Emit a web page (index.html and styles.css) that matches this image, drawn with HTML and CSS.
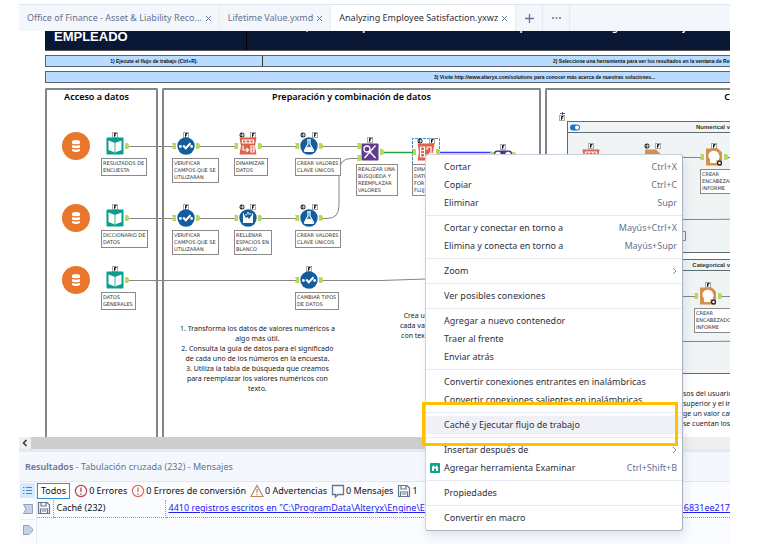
FILE: index.html
```html
<!DOCTYPE html>
<html lang="es">
<head>
<meta charset="utf-8">
<title>Analyzing Employee Satisfaction.yxwz</title>
<link rel="stylesheet" href="styles.css">
</head>
<body>
<svg class="defs" aria-hidden="true">
  <symbol id="flag" viewBox="0 0 6 6"><rect x=".5" y=".5" width="5" height="5" fill="#fff" stroke="#aaa"/><path d="M2.500 4.800V1.500h2M2.500 3h1.500" stroke="#111" fill="none"/></symbol>
  <symbol id="ball" viewBox="0 0 6 6"><circle cx="3" cy="3" r="2.500" fill="#222"/><path d="M3 1.200a1.800 1.800 0 0 1 0 3.600z" fill="#e6c8a8"/><path d="M1 2h2v2H1z" fill="#4577a8"/></symbol>
  <symbol id="in" viewBox="0 0 4 6"><path d="M0 0h4v6H0l1.200-3z" fill="#b4da5c"/></symbol>
  <symbol id="out" viewBox="0 0 4 6"><path d="M0 0h2.500L4 1.500v3L2.500 6H0z" fill="#b4da5c"/></symbol>
  <symbol id="book" viewBox="0 0 18 18"><rect x=".5" y=".5" width="17" height="17" rx="1" fill="#0c9e8d"/><path d="M2.500 3.500 9 6l6.500-2.500v9.500L9 15.500 2.500 13z" fill="#fff"/><path d="M9 6v9" stroke="#0c9e8d" stroke-width=".8"/></symbol>
  <symbol id="check" viewBox="0 0 18 18"><circle cx="9" cy="9" r="8.700" fill="#145d9c"/><path d="m6.200 8.500 2.600 2.800 4.700-5" fill="none" stroke="#fff" stroke-width="2"/><circle cx="3.400" cy="9.500" r="1.400" fill="#fff"/><circle cx="14.600" cy="9.500" r="1.400" fill="#fff"/></symbol>
  <symbol id="flask" viewBox="0 0 18 18"><circle cx="9" cy="9" r="8.700" fill="#145d9c"/><path d="M7.200 2.800h3.600M8 3v4L4.600 13q-.5 1.500 1 1.500h6.800q1.500 0 1-1.500L10 7V3" fill="none" stroke="#fff" stroke-width="1.200"/><path d="M6.300 10.500q2.700-1.500 5.400.3l1.500 3.200H4.800z" fill="#fff"/></symbol>
  <symbol id="clean" viewBox="0 0 18 18"><circle cx="9" cy="9" r="8.700" fill="#145d9c"/><path d="M4 6.500h1.500L7 9l1.500-1L10 10l2.500-3.500H14V14H4z" fill="#fff"/><path d="M4.500 4.500v3M13.500 4.500v3M9 3v2.500M7 5v1.500M11 4v1.500" stroke="#fff" stroke-width="1.200"/></symbol>
  <symbol id="pivot" viewBox="0 0 18 18"><path d="M.5.500h17L16 9l1.500 8.500H.5L2 9z" fill="#df6148"/><path d="M3.500 3h11v3h-11zM7 3v3M11 3v3M12 9h3v6h-3zM12 12h3M4 8.500V13h5M7.500 11 9.500 13l-2 2" fill="none" stroke="#fff" stroke-width="1.200"/></symbol>
  <symbol id="unpivot" viewBox="0 0 18 18"><path d="M.5.500h17L16 9l1.500 8.500H.5L2 9z" fill="#df6148"/><path d="M3.500 4h4v10h-4zM3.500 7.500h4M3.500 10.500h4M10 4h4v8M12 10l2 2 2-2M10 4v3" fill="none" stroke="#fff" stroke-width="1.200"/></symbol>
  <symbol id="find" viewBox="0 0 18 18"><rect x=".5" y=".5" width="17" height="17" rx="1" fill="#613b8e"/><circle cx="6" cy="6" r="3" fill="none" stroke="#fff" stroke-width="1.300"/><path d="m8 8 6.500 7M14.500 2.500 3.500 15" stroke="#fff" stroke-width="1.400"/></symbol>
  <symbol id="join" viewBox="0 0 18 18"><rect y=".5" width="18" height="17" rx="3" fill="#55308a"/><circle cx="4" cy="4.500" r="2.800" fill="#fff"/><circle cx="14" cy="4.500" r="2.800" fill="#fff"/></symbol>
  <symbol id="doc" viewBox="0 0 18 18"><path d="M1 .5h11l5 5v12H1z" fill="#d4914c"/></symbol>
  <symbol id="head" viewBox="0 0 18 18"><path d="M1 .5h12l4 4v13H1z" fill="#d4914c"/><path d="M5 15v-3.500Q3 9.500 3.500 6.500 5 2.500 9 2.700q4.500.3 5 4.300l1 2.500h-1V12h-2.500v3z" fill="#fff"/><circle cx="14.500" cy="15" r="1.900" fill="#fff" stroke="#222" stroke-width="1.300"/></symbol>
  <symbol id="db" viewBox="0 0 28 28"><circle cx="14" cy="14" r="14" fill="#e8762d"/><path d="M10 9q4-2 8 0v2.500q-4 1.700-8 0zM10 13q4 1.500 8 0v2.500q-4 1.700-8 0zM10 17q4 1.500 8 0v2q-4 2-8 0z" fill="#fff"/></symbol>
  <symbol id="save" viewBox="0 0 14 14"><path d="M1.500 1.500h8.500L12.500 4v8.500h-11zM4 1.500v3.500h5V1.500M3.500 12.500V8h7v4.500M5 10h4" fill="none" stroke="#68758c" stroke-width="1.200"/></symbol>
  <symbol id="alert" viewBox="0 0 14 14"><circle cx="7" cy="7" r="5.600" fill="none" stroke="currentColor" stroke-width="1.200"/><path d="M7 3.500v4.500M7 9.200v1.500" stroke="currentColor" stroke-width="1.300"/></symbol>
  <symbol id="close" viewBox="0 0 7 7"><path d="m1 1 5 5M6 1 1 6" stroke="#66749a" stroke-width="1"/></symbol>
</svg>

<div class="app">
  <nav class="tabs" aria-label="Documentos">
    <div class="tab"><a href="#a">Office of Finance - Asset &amp; Liability Reco...</a><button aria-label="Cerrar"><svg width="7" height="7"><use href="#close"/></svg></button></div>
    <div class="tab"><a href="#b">Lifetime Value.yxmd</a><button aria-label="Cerrar"><svg width="7" height="7"><use href="#close"/></svg></button></div>
    <div class="tab active"><a href="#c" aria-current="page">Analyzing Employee Satisfaction.yxwz</a><button aria-label="Cerrar"><svg width="7" height="7"><use href="#close"/></svg></button></div>
    <button class="tool" aria-label="Nueva pestaña"><svg width="11" height="11"><path d="M5.500 1v9M1 5.500h9" stroke="#66749a" stroke-width="1.300"/></svg></button>
    <button class="tool" aria-label="Más"><svg width="11" height="11"><path d="M1 5h2M4.500 5h2M8 5h2" stroke="#66749a" stroke-width="1.500"/></svg></button>
  </nav>

  <main class="canvas">
    <div class="sheet">
      <header class="hero"><h1>EMPLEADO</h1><p>variables, el informe que usamos deberán ser diferentes para los valores categóricos. Este flujo de trabajo puede ser</p></header>
      <div class="bar"><p class="step-one">1) Ejecute el flujo de trabajo (Ctrl+R).</p><p class="step-two">2) Seleccione una herramienta para ver los resultados en la ventana de Resultados.</p></div>
      <div class="bar"><p class="step-three">3) Visite http://www.alteryx.com/solutions para conocer más acerca de nuestras soluciones...</p></div>
      <div class="columns">
        <section class="column access"><h2>Acceso a datos</h2></section>
        <section class="column prep"><h2>Preparación y combinación de datos</h2></section>
        <section class="column build"><h2>C</h2>
          <div class="box"><h3><svg width="11" height="7"><rect y=".5" width="10" height="6" rx="3" fill="#1976d2"/><circle cx="7" cy="3.500" r="2" fill="#fff"/></svg><span>Numerical v</span></h3></div>
          <div class="box low"><h3><span>Categorical v</span></h3></div>
        </section>
      </div>
    </div>

    <svg class="wires" width="738" height="406" viewBox="19 31 738 406" fill="none" stroke="#858585">
      <path d="M128 146.500h45M200 146.500h36M260 146.500h37M321 146.500h37M128 218.500h45M200 218.500h36M260 218.500h37M321 218.500h6q12 0 12-13v-33q0-14 12-14h8M128 280.500h169M321 280.500h60l45-1.500"/>
      <path d="M683 157.500h19M727 157.500h30M683 296.500h13M720 296.500h37M683 219.500h22l52-.5M683 341.500h24l50-.5M683 231.500h2.500v9H683"/>
      <path d="M382 152.500h31" stroke="#25a244" stroke-width="1.500"/>
      <path d="M440 152.500h52" stroke="#3a3cff" stroke-width="1.500"/>
      <path d="M412.500 164v-25.500h27V164" stroke="#2f8fdb" stroke-dasharray="3 1"/>
      <path d="M560 113.500h5M562.500 112v4" stroke="#557"/><use href="#flag" x="559" y="115" width="6" height="6"/>
      <g stroke="none"><use href="#db" x="62" y="132" width="28" height="28"/><use href="#db" x="62" y="204" width="28" height="28"/><use href="#db" x="62" y="266" width="28" height="28"/></g>
    </svg>

    <figure class="node col-a row-1"><svg viewBox="-14 -15 30 27"><use href="#flag" x="-3" y="-14" width="6" height="6"/><use href="#book" x="-9" y="-9" width="18" height="18"/><use href="#out" x="10" y="-3" width="4" height="6"/></svg><figcaption>RESULTADOS DE<br>ENCUESTA</figcaption></figure>
    <figure class="node col-a row-2"><svg viewBox="-14 -15 30 27"><use href="#flag" x="-3" y="-14" width="6" height="6"/><use href="#book" x="-9" y="-9" width="18" height="18"/><use href="#out" x="10" y="-3" width="4" height="6"/></svg><figcaption>DICCIONARIO DE<br>DATOS</figcaption></figure>
    <figure class="node col-a row-3"><svg viewBox="-14 -15 30 27"><use href="#flag" x="-3" y="-14" width="6" height="6"/><use href="#book" x="-9" y="-9" width="18" height="18"/><use href="#out" x="10" y="-3" width="4" height="6"/></svg><figcaption>DATOS<br>GENERALES</figcaption></figure>
    <figure class="node col-b row-1"><svg viewBox="-14 -15 30 27"><use href="#flag" x="-3" y="-14" width="6" height="6"/><use href="#check" x="-9" y="-9" width="18" height="18"/><use href="#in" x="-14" y="-3" width="4" height="6"/><use href="#out" x="10" y="-3" width="4" height="6"/></svg><figcaption>VERIFICAR<br>CAMPOS QUE SE<br>UTILIZARÁN</figcaption></figure>
    <figure class="node col-b row-2"><svg viewBox="-14 -15 30 27"><use href="#flag" x="-3" y="-14" width="6" height="6"/><use href="#check" x="-9" y="-9" width="18" height="18"/><use href="#in" x="-14" y="-3" width="4" height="6"/><use href="#out" x="10" y="-3" width="4" height="6"/></svg><figcaption>VERIFICAR<br>CAMPOS QUE SE<br>UTILIZARÁN</figcaption></figure>
    <figure class="node col-c row-1"><svg viewBox="-14 -15 30 27"><use href="#ball" x="-9" y="-14" width="6" height="6"/><use href="#flag" x="2" y="-14" width="6" height="6"/><use href="#pivot" x="-9" y="-9" width="18" height="18"/><use href="#in" x="-14" y="-3" width="4" height="6"/><use href="#out" x="10" y="-3" width="4" height="6"/></svg><figcaption>DINAMIZAR<br>DATOS</figcaption></figure>
    <figure class="node col-c row-2"><svg viewBox="-14 -15 30 27"><use href="#ball" x="-9" y="-14" width="6" height="6"/><use href="#flag" x="2" y="-14" width="6" height="6"/><use href="#clean" x="-9" y="-9" width="18" height="18"/><use href="#in" x="-14" y="-3" width="4" height="6"/><use href="#out" x="10" y="-3" width="4" height="6"/></svg><figcaption>RELLENAR<br>ESPACIOS EN<br>BLANCO</figcaption></figure>
    <figure class="node col-d row-1"><svg viewBox="-14 -15 30 27"><use href="#ball" x="-9" y="-14" width="6" height="6"/><use href="#flag" x="3" y="-14" width="6" height="6"/><use href="#flask" x="-9" y="-9" width="18" height="18"/><use href="#in" x="-14" y="-3" width="4" height="6"/><use href="#out" x="10" y="-3" width="4" height="6"/></svg><figcaption>CREAR VALORES<br>CLAVE ÚNICOS</figcaption></figure>
    <figure class="node col-d row-2"><svg viewBox="-14 -15 30 27"><use href="#ball" x="-9" y="-14" width="6" height="6"/><use href="#flag" x="3" y="-14" width="6" height="6"/><use href="#flask" x="-9" y="-9" width="18" height="18"/><use href="#in" x="-14" y="-3" width="4" height="6"/><use href="#out" x="10" y="-3" width="4" height="6"/></svg><figcaption>CREAR VALORES<br>CLAVE ÚNICOS</figcaption></figure>
    <figure class="node col-d row-3"><svg viewBox="-14 -15 30 27"><use href="#flag" x="-3" y="-14" width="6" height="6"/><use href="#check" x="-9" y="-9" width="18" height="18"/><use href="#in" x="-14" y="-3" width="4" height="6"/><use href="#out" x="10" y="-3" width="4" height="6"/></svg><figcaption>CAMBIAR TIPOS<br>DE DATOS</figcaption></figure>
    <figure class="node replace"><svg viewBox="-14 -15 30 27"><use href="#flag" x="-3" y="-15" width="6" height="6"/><use href="#find" x="-9" y="-9" width="18" height="18"/><use href="#in" x="-13" y="-9" width="4" height="6"/><use href="#in" x="-13" y="3" width="4" height="6"/><use href="#out" x="10" y="-3" width="4" height="6"/></svg><figcaption>REALIZAR UNA<br>BÚSQUEDA Y<br>REEMPLAZAR<br>VALORES</figcaption></figure>
    <figure class="node selected"><svg viewBox="-14 -15 30 27"><use href="#ball" x="-9" y="-14" width="6" height="6"/><use href="#flag" x="3" y="-14" width="6" height="6"/><use href="#unpivot" x="-9" y="-9" width="18" height="18"/><use href="#in" x="-14" y="-3" width="4" height="6"/><use href="#out" x="10" y="-3" width="4" height="6"/></svg><figcaption>DINA<br>DATO<br>FOR<br>FLUJ</figcaption></figure>
    <figure class="node merge"><svg viewBox="-14 -15 30 27"><use href="#flag" x="-3" y="-15" width="6" height="6"/><use href="#join" x="-9" y="-9" width="18" height="18"/><use href="#in" x="-13" y="-7" width="4" height="6"/><use href="#out" x="9" y="-7" width="4" height="6"/></svg></figure>
    <figure class="node num-a"><svg viewBox="-14 -15 30 27"><use href="#flag" x="-3" y="-13" width="6" height="6"/><use href="#pivot" x="-9" y="-7" width="18" height="18"/></svg></figure>
    <figure class="node num-b"><svg viewBox="-14 -15 30 27"><use href="#ball" x="-9" y="-13" width="6" height="6"/><use href="#flag" x="2" y="-13" width="6" height="6"/><use href="#doc" x="-9" y="-7" width="18" height="18"/></svg></figure>
    <figure class="node num-c"><svg viewBox="-14 -15 30 27"><use href="#flag" x="-3" y="-14" width="6" height="6"/><use href="#head" x="-9" y="-9" width="18" height="18"/><use href="#in" x="-14" y="-3" width="4" height="6"/><use href="#out" x="10" y="-3" width="4" height="6"/></svg><figcaption>CREAR<br>ENCABEZADO<br>INFORME</figcaption></figure>
    <figure class="node cat-c"><svg viewBox="-14 -15 30 27"><use href="#flag" x="-3" y="-14" width="6" height="6"/><use href="#head" x="-9" y="-9" width="18" height="18"/><use href="#in" x="-14" y="-3" width="4" height="6"/><use href="#out" x="10" y="-3" width="4" height="6"/></svg><figcaption>CREAR<br>ENCABEZADO<br>INFORME</figcaption></figure>

    <p class="note note-steps">1. Transforma los datos de valores numéricos a<br>algo más útil.<br>2. Consulta la guía de datos para el significado<br>de cada uno de los números en la encuesta.<br>3. Utiliza la tabla de búsqueda que creamos<br>para reemplazar los valores numéricos con<br>texto.</p>
    <p class="note note-create">Crea u<br>cada va<br>con tex</p>
    <p class="note note-user">sos del usuario<br>superior y el in<br>ge un valor cat<br>se cuentan los</p>
  </main>

  <div class="scroll"><button aria-label="Izquierda"><svg width="6" height="8"><path d="M4.500 1 1.500 4l3 3" fill="none" stroke="#333" stroke-width="1.500"/></svg></button><div class="thumb"></div></div>

  <section class="results">
    <h2><b>Resultados</b> - Tabulación cruzada (232) - Mensajes</h2>
    <div class="results-body">
      <div class="rail">
        <button class="on" aria-label="Lista"><svg width="9" height="9"><path d="M0 1.500h1.500M3 1.500h6M0 4.500h1.500M3 4.500h6M0 7.500h1.500M3 7.500h6" stroke="#4d86bd"/></svg></button>
        <button aria-label="Entrada"><svg width="10" height="10"><path d="M.5.500h9v9h-9L3 5z" fill="#c7d1e4" stroke="#8fa0c2"/></svg></button>
        <button class="split" aria-label="Salida"><svg width="10" height="10"><path d="M.5.500H6L9.500 4v2L6 9.500H.5z" fill="#c7d1e4" stroke="#8fa0c2"/></svg></button>
      </div>
      <div class="list">
        <div class="filters">
          <button class="all">Todos</button>
          <button class="red"><svg width="14" height="14"><use href="#alert"/></svg>0 Errores</button>
          <button class="coral"><svg width="14" height="14"><use href="#alert"/></svg>0 Errores de conversión</button>
          <button><svg width="14" height="14"><path d="M7 1.500 13 12.500H1z" fill="none" stroke="#b98a62" stroke-width="1.200"/><path d="M7 5v4M7 10v1.300" stroke="#b98a62" stroke-width="1.200"/></svg>0 Advertencias</button>
          <button><svg width="14" height="14"><path d="M1.500 1.500h11v9H7l-2.500 2.500v-2.500h-3z" fill="none" stroke="#68758c" stroke-width="1.300"/></svg>0 Mensajes</button>
          <button><svg width="14" height="14"><use href="#save"/></svg>1</button>
        </div>
        <table><tr><td class="ico"><svg width="14" height="14"><use href="#save"/></svg></td><td class="name">Caché (232)</td><td class="link"><div><a href="#log">4410 registros escritos en "C:\ProgramData\Alteryx\Engine\Enc</a><a href="#log">_6831ee217</a></div></td></tr></table>
      </div>
    </div>
  </section>

  <ul class="menu" role="menu">
    <li><button>Cortar<kbd>Ctrl+X</kbd></button></li>
    <li><button>Copiar<kbd>Ctrl+C</kbd></button></li>
    <li><button>Eliminar<kbd>Supr</kbd></button></li>
    <li class="sep"><button>Cortar y conectar en torno a<kbd>Mayús+Ctrl+X</kbd></button></li>
    <li><button>Elimina y conecta en torno a<kbd>Mayús+Supr</kbd></button></li>
    <li class="sep"><button>Zoom<svg width="5" height="8"><path d="m1 1 3 3-3 3" fill="none" stroke="#7d8bab"/></svg></button></li>
    <li class="sep"><button>Ver posibles conexiones</button></li>
    <li class="sep"><button>Agregar a nuevo contenedor</button></li>
    <li><button>Traer al frente</button></li>
    <li><button>Enviar atrás</button></li>
    <li class="sep"><button>Convertir conexiones entrantes en inalámbricas</button></li>
    <li><button>Convertir conexiones salientes en inalámbricas</button></li>
    <li class="sep"><button class="current">Caché y Ejecutar flujo de trabajo</button></li>
    <li class="sep"><button>Insertar después de<svg width="5" height="8"><path d="m1 1 3 3-3 3" fill="none" stroke="#7d8bab"/></svg></button></li>
    <li><button class="with-icon"><svg width="10" height="10"><rect width="10" height="10" rx="1" fill="#12a08f"/><path d="M2 8V4.500L3 2.500h1.300V4h1.400V2.500H7l1 2V8H6V5.500H4V8z" fill="#fff"/></svg>Agregar herramienta Examinar<kbd>Ctrl+Shift+B</kbd></button></li>
    <li class="sep"><button>Propiedades</button></li>
    <li class="sep"><button>Convertir en macro</button></li>
  </ul>
  <div class="frame"></div>
</div>
</body>
</html>
```
FILE: styles.css
```css
* { box-sizing: border-box; margin: 0; padding: 0; }
body { background: #fff; font: 9px/12px "Noto Sans", sans-serif; color: #2d3142; overflow: hidden; }
button { font: inherit; color: inherit; background: none; border: 0; }
a { color: inherit; text-decoration: none; }
svg { display: block; flex: none; }
.defs { position: absolute; width: 0; height: 0; }

.app { position: relative; display: flex; flex-direction: column; height: 100vh; margin: 0 27px 0 19px; padding-top: 4px; }

.tabs { display: flex; flex: none; height: 27px; background: #f3f7fc; border-top: 1px solid #dbe5f1; color: #66728f; }
.tab { display: flex; align-items: center; gap: 3px; padding: 0 7px 0 8px; border-right: 1px solid #e6edf6; white-space: nowrap; }
.tab.active { background: #fff; color: #2d3142; }
.tool { display: flex; align-items: center; justify-content: center; width: 27px; border-right: 1px solid #e3eaf4; }

.canvas { position: relative; flex: 1; min-height: 0; overflow: hidden; background: #fff; }
.sheet { display: flex; flex-direction: column; gap: 4px; height: 100%; padding-left: 26px; }
.hero { display: flex; flex: none; height: 20px; overflow: hidden; background: #0a1735; border-bottom: 1px solid #555; color: #fff; white-space: nowrap; }
.hero h1 { flex: none; width: 202px; padding-left: 9px; border-right: 1px solid #000; font: bold 13px/12px "Liberation Sans", sans-serif; }
.hero p { margin-top: -8px; padding-left: 18px; font-weight: bold; line-height: 10px; }
.bar { display: flex; flex: none; height: 12px; background: #b9dbff; border: 1px solid #59616d; border-right: 0; font: bold 5px/10px "Liberation Sans", sans-serif; color: #111; white-space: nowrap; overflow: hidden; }
.step-one { flex: none; width: 217px; text-align: center; border-right: 1px solid #333; }
.step-two { padding-left: 290px; }
.step-three { padding-left: 388px; }
.columns { display: flex; flex: 1; gap: 4px; padding-top: 1px; }
.column { border: 2px solid #858585; border-bottom: 0; border-radius: 2px 2px 0 0; }
.column h2 { font-size: 9px; font-weight: 600; line-height: 14px; text-align: center; color: #000; }
.access { width: 113px; padding-right: 10px; }
.prep { width: 379px; }
.build { flex: 1; border-right: 0; border-top-right-radius: 0; padding-left: 20px; }
.build h2 { text-align: right; }
.box { height: 132px; margin-top: 17px; background: #f0f4f5; border: 1px solid #5b6d70; border-right: 0; overflow: hidden; }
.box.low { height: 115px; margin-top: 6px; }
.box h3 { display: flex; align-items: center; height: 11px; padding-left: 2px; border-bottom: 1px solid #5b6d70; font: bold 6px/10px "Liberation Sans", sans-serif; color: #333; white-space: nowrap; }
.box span { margin-left: auto; }

.wires { position: absolute; left: 0; top: 0; }
.node { position: absolute; }
.node svg { width: 30px; height: 27px; }
.node figcaption { width: max-content; padding: 1px 2px 1px 1px; background: #fff; border: 1px solid #8a8a8a; font: 5px/7px "DejaVu Sans", sans-serif; color: #333; }
.row-1 { top: 100px; }
.row-2 { top: 172px; }
.row-3 { top: 234px; }
.col-a { left: 82px; }
.col-b { left: 153px; }
.col-c { left: 215px; }
.col-d { left: 276px; }
.replace { left: 337px; top: 106px; }
.selected { left: 393px; top: 106px; }
.merge { left: 470px; top: 113px; }
.num-a { left: 558px; top: 110px; }
.num-b { left: 620px; top: 110px; }
.num-c { left: 681px; top: 111px; }
.cat-c { left: 675px; top: 250px; }
.note { position: absolute; font-size: 7px; line-height: 10px; color: #222; white-space: nowrap; }
.note-steps { left: 161px; top: 293px; text-align: center; }
.note-create { left: 381px; top: 280px; text-align: right; }
.note-user { left: 664px; top: 358px; }

.scroll { display: flex; flex: none; height: 12px; background: #efefef; }
.scroll button { display: flex; align-items: center; justify-content: center; width: 12px; }
.thumb { width: 80%; background: #cdcdcd; }

.results { flex: none; height: 95px; background: #fafcff; border-top: 3px solid #e2e9f4; overflow: hidden; }
.results h2 { height: 30px; padding-left: 6px; background: #f4f8fd; border-bottom: 1px solid #e0e6f2; font-size: 9px; line-height: 29px; font-weight: normal; color: #66728f; }
.results b { font-weight: 600; }
.results-body { display: flex; height: 62px; }
.rail { width: 18px; border-right: 1px solid #e6ebf5; padding-top: 1px; }
.rail button { display: flex; align-items: center; justify-content: center; width: 15px; height: 15px; margin-bottom: 3px; margin-left: 1px; }
.rail .on { background: #d6eaff; }
.rail .split { height: 20px; border-top: 1px solid #e6ebf5; }
.list { flex: 1; min-width: 0; }
.filters { display: flex; align-items: center; gap: 4px; height: 18px; color: #111; white-space: nowrap; overflow: hidden; }
.filters button { display: flex; align-items: center; gap: 1px; }
.filters .all { height: 16px; padding: 0 3px; border: 1px solid #3390dd; background: #fff; }
.red svg { color: #c04050; }
.coral svg { color: #d9705a; }
table { width: 100%; table-layout: fixed; border-collapse: collapse; color: #111; }
td { height: 17px; border-bottom: 1px dotted #999; }
.ico { width: 16px; }
.name { width: 112px; padding-left: 3px; border-left: 1px dotted #999; border-right: 1px dotted #999; }
.link { padding-left: 3px; }
.link div { display: flex; justify-content: space-between; white-space: nowrap; color: #2222ee; }
.link a { text-decoration: underline; }

.menu { position: absolute; left: 406px; top: 154px; width: 258px; padding: 3px 0; list-style: none; background: #fff; border: 1px solid #cdd2e2; border-right-color: #aab0c2; border-bottom-color: #aab0c2; border-radius: 3px; box-shadow: 2px 6px 10px rgba(60, 70, 110, .12); }
.menu button { display: flex; align-items: center; width: 100%; height: 18px; padding: 0 5px 0 18px; text-align: left; }
.menu .sep { margin-top: 3px; padding-top: 3px; border-top: 1px solid #e6e9f2; }
.menu kbd, .menu button > svg:last-child { margin-left: auto; }
.menu kbd { font: inherit; color: #66728f; }
.menu .with-icon { padding-left: 4px; gap: 4px; }
.menu .current { background: #eff1f6; }
.frame { position: absolute; left: 403px; top: 402px; width: 256px; height: 44px; border: 3px solid #ffc000; }
```
